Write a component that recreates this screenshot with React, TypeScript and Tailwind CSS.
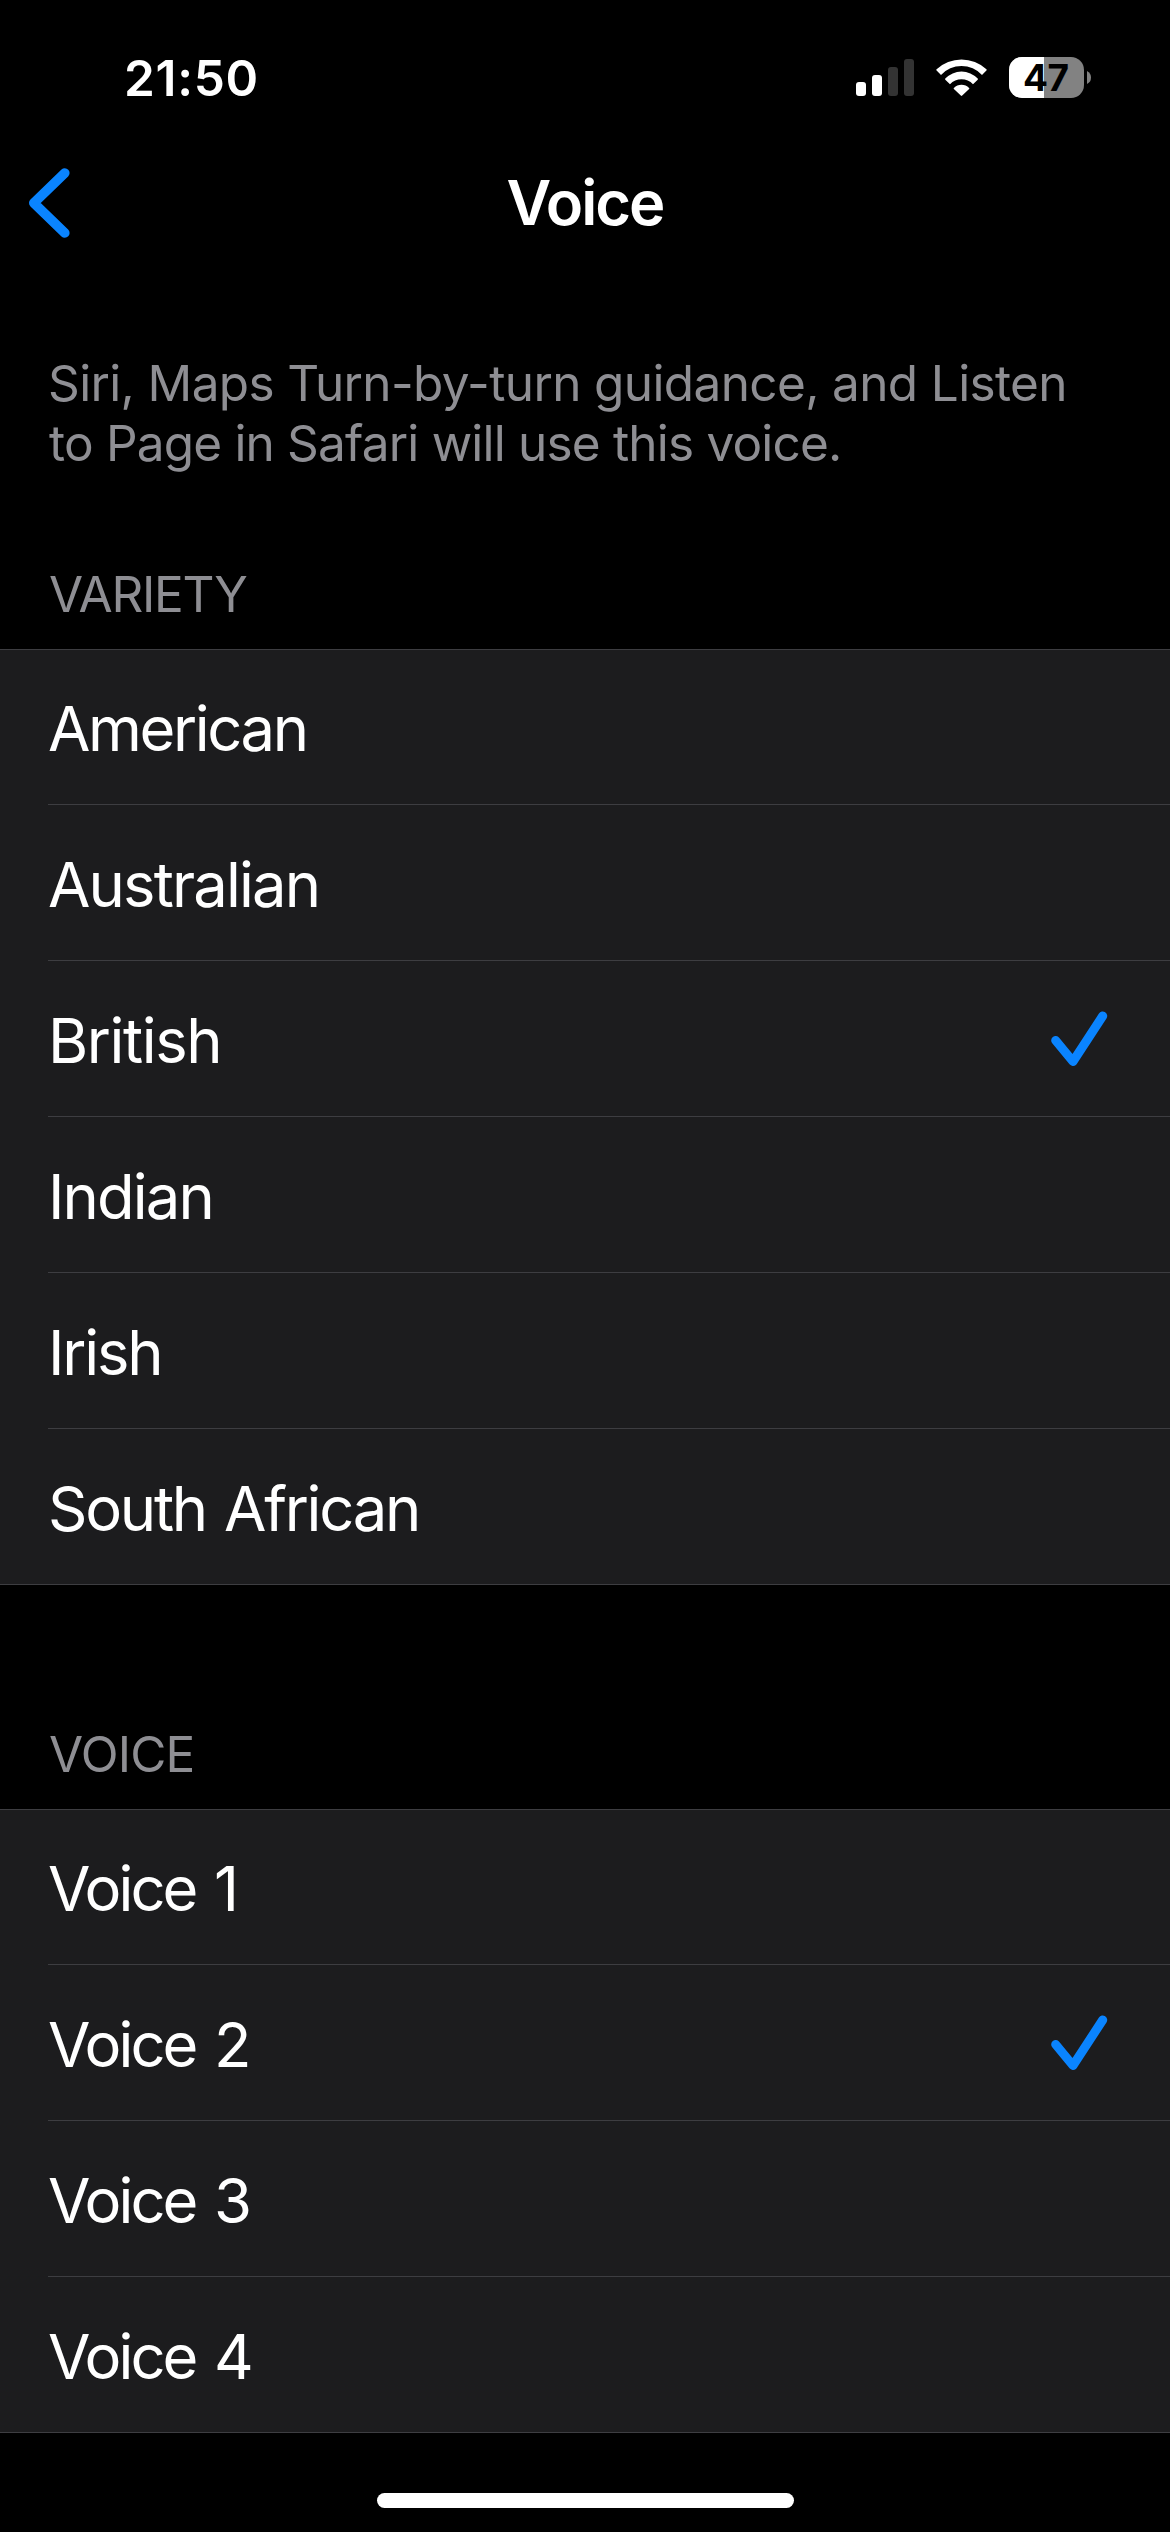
type Option = { label: string; tracking: string; selected?: boolean };

const varieties: Option[] = [
  { label: "American", tracking: "tracking-[-2.4px]" },
  { label: "Australian", tracking: "tracking-[-1.85px]" },
  { label: "British", tracking: "tracking-[-1.4px]", selected: true },
  { label: "Indian", tracking: "tracking-[-1.9px]" },
  { label: "Irish", tracking: "tracking-[-2.2px]" },
  { label: "South African", tracking: "tracking-[-2.25px] [word-spacing:3px]" },
];

const voices: Option[] = [
  { label: "Voice 1", tracking: "tracking-[-2.9px] [word-spacing:4px]" },
  { label: "Voice 2", tracking: "tracking-[-2.9px] [word-spacing:4px]", selected: true },
  { label: "Voice 3", tracking: "tracking-[-2.9px] [word-spacing:4px]" },
  { label: "Voice 4", tracking: "tracking-[-2.9px] [word-spacing:4px]" },
];

function SignalIcon() {
  return (
    <svg width="58" height="41" viewBox="0 0 58 41">
      <rect x="0" y="25" width="10" height="14" rx="3" fill="#fff" />
      <rect x="16" y="18" width="10" height="21" rx="3" fill="#fff" />
      <rect x="32" y="10" width="10" height="29" rx="3" fill="#333" />
      <rect x="48" y="2" width="10" height="37" rx="3" fill="#333" />
    </svg>
  );
}

function WifiIcon() {
  return (
    <svg width="51" height="41" viewBox="0 0 51 41" fill="#fff">
      <path d="M0.6 12.3A36.7 36.7 0 0 1 50.4 12.3Q51 12.9 50.4 13.5L46 18A27.8 27.8 0 0 0 5 18L0.6 13.5Q0 12.9 0.6 12.3Z" />
      <path d="M9.3 21.6A22.3 22.3 0 0 1 41.7 21.6Q42.2 22.2 41.7 22.8L37 27.2A15.7 15.7 0 0 0 14 27.2L9.3 22.8Q8.8 22.2 9.3 21.6Z" />
      <path d="M17.9 30.9A10.6 10.6 0 0 1 33.1 30.9Q33.7 31.4 33.1 32L26.2 38.6Q25.5 39.3 24.8 38.6L17.9 32Q17.3 31.4 17.9 30.9Z" />
    </svg>
  );
}

function Battery() {
  return (
    <div className="relative h-[41px] w-[82px]">
      <svg width="82" height="41" viewBox="0 0 82 41">
        <clipPath id="charge">
          <rect width="35" height="41" />
        </clipPath>
        <rect width="75" height="41" rx="13" fill="#828282" />
        <rect width="75" height="41" rx="13" fill="#fff" clipPath="url(#charge)" />
        <path d="M78 14Q82 16 82 20.5T78 27Z" fill="#828282" />
      </svg>
      <span className="absolute -top-[2px] left-[14px] text-[37px] leading-[45px] font-bold tracking-[-0.5px] text-black">
        47
      </span>
    </div>
  );
}

function Check() {
  return (
    <svg className="mr-[62px]" width="58" height="56" viewBox="0 0 58 56" fill="none">
      <path
        d="M5.7 30.5L23 51.5L52.7 6"
        stroke="#0a84ff"
        strokeWidth="9"
        strokeLinecap="round"
        strokeLinejoin="round"
      />
    </svg>
  );
}

function OptionList({ title, items, className }: { title: string; items: Option[]; className: string }) {
  return (
    <section>
      <h2 className={className}>{title}</h2>
      <ul className="bg-[#1c1c1e] shadow-[inset_0_1px_0_#3d3d41]">
        {items.map((item, i) => (
          <li key={item.label} className="flex h-[156px] flex-col">
            <div className="flex flex-1 items-start justify-between pl-[48px]">
              <span className={`mt-[42px] text-[61.5px] leading-[75px] text-white ${item.tracking}`}>
                {item.label}
              </span>
              {item.selected && (
                <div className="mt-[49px]">
                  <Check />
                </div>
              )}
            </div>
            <div className={i === items.length - 1 ? "h-px bg-[#3d3d41]" : "ml-[48px] h-px bg-[#3d3d41]"} />
          </li>
        ))}
      </ul>
    </section>
  );
}

export default function App() {
  return (
    <div className="flex h-[2532px] w-[1170px] flex-col overflow-hidden bg-black font-['Inter',sans-serif] text-white">
      <div className="flex h-[156px] items-start justify-between pr-[79px] pl-[124px]">
        <span className="mt-[48px] text-[49.5px] leading-[60px] font-semibold tracking-[0.7px]">21:50</span>
        <div className="mt-[57px] flex gap-[22px]">
          <SignalIcon />
          <WifiIcon />
          <Battery />
        </div>
      </div>

      <header className="grid h-[94px] grid-cols-3 items-start">
        <svg className="mt-[7px] ml-[24px]" width="50" height="80" viewBox="0 0 50 80" fill="none">
          <path
            d="M40.8 10L9.8 40L40.8 70"
            stroke="#0a84ff"
            strokeWidth="9.6"
            strokeLinecap="round"
            strokeLinejoin="round"
          />
        </svg>
        <h1 className="mt-[9px] text-center text-[61.5px] leading-[75px] font-semibold tracking-[-2px]">
          Voice
        </h1>
      </header>

      <p className="mt-[103px] flex flex-col pl-[48px] text-[49.5px] leading-[60px] whitespace-nowrap text-[#8e8e93]">
        <span className="tracking-[-0.63px]">Siri, Maps Turn-by-turn guidance, and Listen</span>
        <span className="ml-px tracking-[-0.81px]">to Page in Safari will use this voice.</span>
      </p>

      <OptionList
        title="VARIETY"
        items={varieties}
        className="pt-[91px] pb-[25px] pl-[49px] text-[49.5px] leading-[60px] tracking-[-1.25px] text-[#8e8e93]"
      />
      <OptionList
        title="VOICE"
        items={voices}
        className="pt-[139px] pb-[25px] pl-[49px] text-[49.5px] leading-[60px] tracking-[-0.8px] text-[#8e8e93]"
      />

      <div className="mt-[60px] h-[15px] w-[417px] self-center rounded-full bg-white" />
    </div>
  );
}
